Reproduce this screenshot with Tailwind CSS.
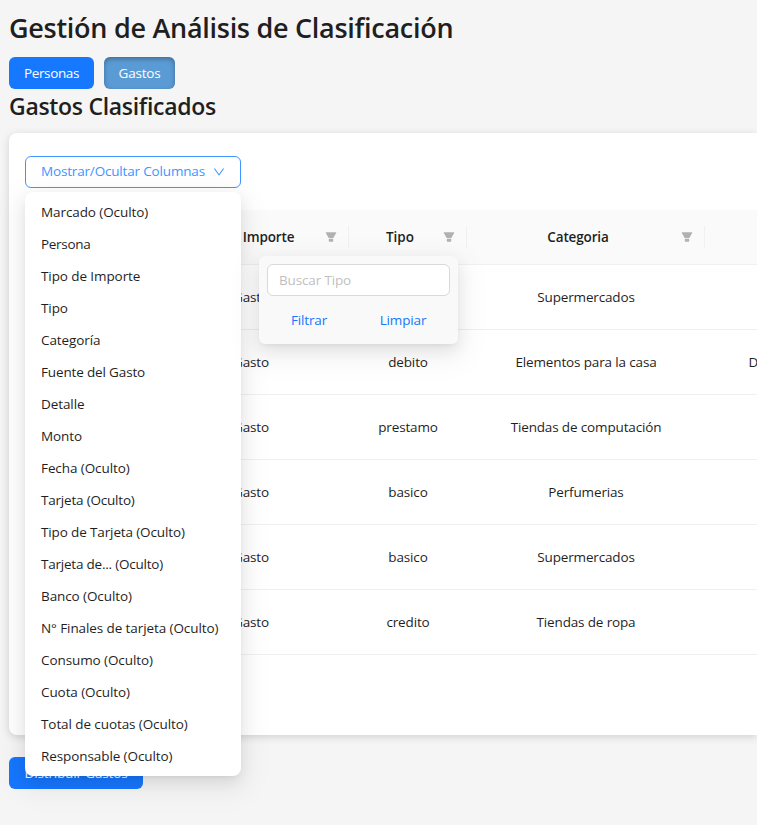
<!DOCTYPE html>
<html lang="es">
<head>
<meta charset="utf-8">
<title>Gestión de Análisis de Clasificación</title>
<script src="https://cdn.jsdelivr.net/npm/@tailwindcss/browser@4"></script>
</head>
<body class="relative h-[825px] w-[757px] overflow-hidden bg-[#f5f5f5] pl-[9px] pt-[10px] font-['Open_Sans','Noto_Sans',sans-serif] text-[13.5px] leading-[22px] tracking-[-0.15px] text-[#1f1f1f]">
<svg class="hidden">
  <symbol id="filter" viewBox="64 64 896 896"><path d="M349 838c0 17.7 14.2 32 31.8 32h262.4c17.6 0 31.8-14.3 31.8-32V642H349v196zm531.1-684H143.9c-24.5 0-39.8 26.7-27.5 48l221.3 376h348.8l221.3-376c12.1-21.3-3.2-48-27.7-48z"/></symbol>
  <symbol id="down" viewBox="64 64 896 896"><path d="M884 256h-75c-5.1 0-9.9 2.5-12.9 6.6L512 654.2 227.9 262.6c-3-4.1-7.8-6.6-12.9-6.6h-75c-6.5 0-10.3 7.4-6.5 12.7l352.6 486.1c12.8 17.6 39 17.6 51.7 0l352.6-486.1c3.9-5.3.1-12.7-6.4-12.7z"/></symbol>
</svg>

<h1 class="h-[47px] whitespace-nowrap text-[27px] font-semibold leading-[36px] tracking-[-0.28px]">Gestión de Análisis de Clasificación</h1>
<div class="flex h-8 gap-[10px] text-white">
  <button class="flex w-[85px] items-center justify-center rounded-md bg-[#1677ff] tracking-[-0.35px]">Personas</button>
  <button class="flex w-[71px] items-center justify-center rounded-md bg-[#5b9bd5] tracking-[-0.2px] shadow-[inset_0_2px_5px_rgba(0,0,0,0.3)]">Gastos</button>
</div>
<h2 class="h-[44px] whitespace-nowrap pt-px text-[23px] font-semibold leading-[32px] tracking-[-0.3px]">Gastos Clasificados</h2>

<section class="h-[602px] w-[748px] rounded-l-lg bg-white pl-4 pt-[23px] shadow-[0_2px_8px_rgba(0,0,0,0.15)]">
  <div class="relative z-20 w-[216px]">
    <button class="flex h-8 w-full items-center rounded-md border border-[#4096ff] pl-[15px] text-[#4096ff]">
      <span class="w-[172px] whitespace-nowrap pb-0.5 text-left tracking-[-0.17px]">Mostrar/Ocultar Columnas</span>
      <svg class="size-3 fill-current"><use href="#down"/></svg>
    </button>
    <ul class="absolute left-0 top-9 w-[216px] rounded-lg bg-white p-1 tracking-[-0.09px] shadow-[0_6px_16px_0_rgba(0,0,0,0.08),0_3px_6px_-4px_rgba(0,0,0,0.12),0_9px_28px_8px_rgba(0,0,0,0.05)] *:flex *:h-8 *:items-center *:whitespace-nowrap *:px-3">
      <li>Marcado (Oculto)</li>
      <li class="tracking-[-0.3px]">Persona</li>
      <li>Tipo de Importe</li>
      <li>Tipo</li>
      <li>Categoría</li>
      <li class="tracking-[-0.15px]">Fuente del Gasto</li>
      <li>Detalle</li>
      <li>Monto</li>
      <li>Fecha (Oculto)</li>
      <li class="tracking-[-0.2px]">Tarjeta (Oculto)</li>
      <li class="tracking-[-0.13px]">Tipo de Tarjeta (Oculto)</li>
      <li class="tracking-[-0.22px]">Tarjeta de... (Oculto)</li>
      <li>Banco (Oculto)</li>
      <li>N° Finales de tarjeta (Oculto)</li>
      <li>Consumo (Oculto)</li>
      <li>Cuota (Oculto)</li>
      <li>Total de cuotas (Oculto)</li>
      <li>Responsable (Oculto)</li>
    </ul>
  </div>

  <div class="relative mt-[22px] w-[732px]">
    <div class="grid h-[55px] grid-cols-[128px_196px_118px_238px_52px] items-center border-b border-[#f0f0f0] bg-[#fafafa] font-semibold">
      <div class="h-[22px] border-r border-[#f0f0f0]"></div>
      <div class="flex h-[22px] items-center border-r border-[#f0f0f0] pl-4 pr-[11px]"><span class="mr-2 flex-1 pl-px text-center">Tipo de Importe</span><svg class="size-3 fill-black/29"><use href="#filter"/></svg></div>
      <div class="flex h-[22px] items-center border-r border-[#f0f0f0] pl-4 pr-[11px]"><span class="mr-2 flex-1 text-center tracking-normal">Tipo</span><svg class="size-3 fill-black/29"><use href="#filter"/></svg></div>
      <div class="flex h-[22px] items-center border-r border-[#f0f0f0] pl-4 pr-[11px]"><span class="mr-2 flex-1 text-center">Categoria</span><svg class="size-3 fill-black/29"><use href="#filter"/></svg></div>
      <div></div>
    </div>
    <div class="text-center *:grid *:h-[65px] *:grid-cols-[128px_196px_118px_238px_52px] *:items-center *:border-b *:border-[#f0f0f0]">
      <div><span></span><span>Gasto</span><span>tarjeta</span><span>Supermercados</span><span></span></div>
      <div><span></span><span>Gasto</span><span>debito</span><span>Elementos para la casa</span><span class="overflow-hidden pl-[43.5px] text-left">D</span></div>
      <div><span></span><span>Gasto</span><span>prestamo</span><span>Tiendas de computación</span><span></span></div>
      <div><span></span><span>Gasto</span><span>basico</span><span>Perfumerias</span><span></span></div>
      <div><span></span><span>Gasto</span><span>basico</span><span>Supermercados</span><span></span></div>
      <div><span></span><span>Gasto</span><span>credito</span><span>Tiendas de ropa</span><span></span></div>
    </div>

    <div class="absolute left-[234px] top-[46px] z-30 h-[88px] w-[199px] rounded-md bg-[#f9f9f9] p-2 shadow-[0_6px_16px_0_rgba(0,0,0,0.08),0_3px_6px_-4px_rgba(0,0,0,0.12),0_9px_28px_8px_rgba(0,0,0,0.05)]">
      <div class="flex h-8 items-center rounded-md border border-[#d9d9d9] bg-white px-[11px] text-[#bfbfbf]">Buscar Tipo</div>
      <div class="mt-2 flex h-8 items-center text-[#1677ff]">
        <span class="w-[84px] text-center">Filtrar</span>
        <span class="ml-[10px] w-[84px] text-center">Limpiar</span>
      </div>
    </div>
  </div>
</section>

<button class="mt-[22px] flex h-8 w-[134px] items-center justify-center rounded-md bg-[#1677ff] text-white">Distribuir Gastos</button>
</body>
</html>
